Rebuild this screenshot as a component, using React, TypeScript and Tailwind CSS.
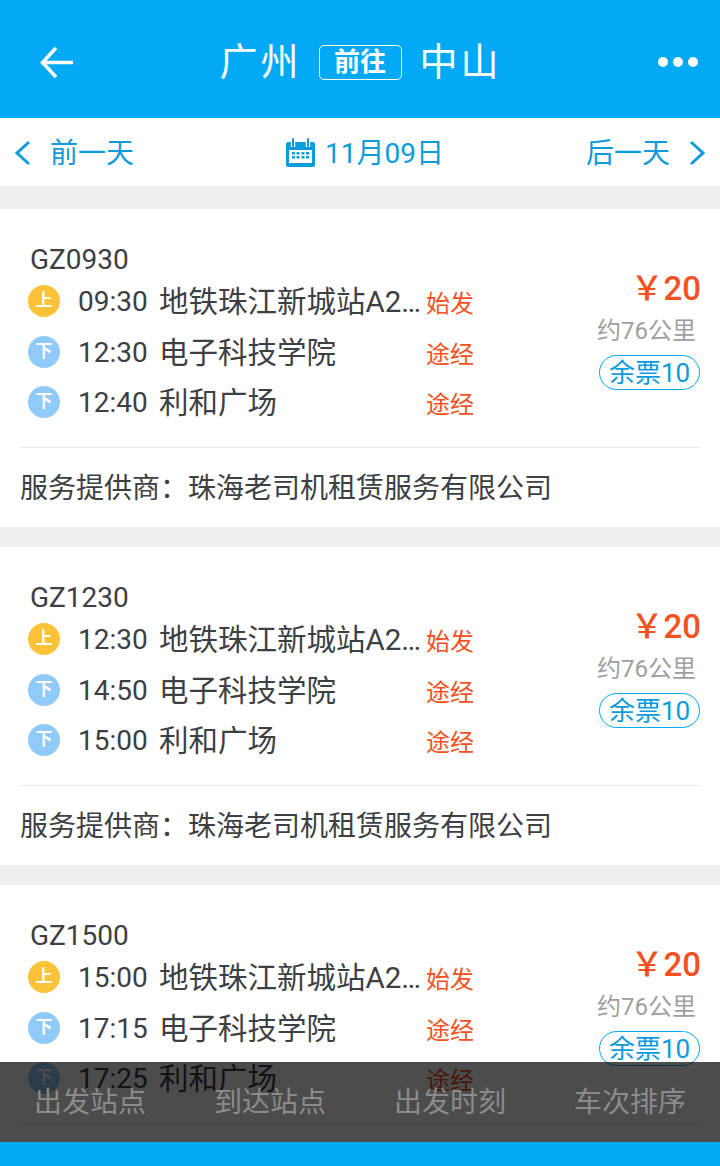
import React from "react";

const font = { fontFamily: '"Roboto","Noto Sans CJK SC",sans-serif' };

function Badge({ up }: { up: boolean }) {
  return (
    <div className={`w-8 h-8 rounded-full flex items-center justify-center text-[17px] font-bold text-white shrink-0 ${up ? "bg-[#fdc338]" : "bg-[#90caf9]"}`}>
      {up ? "上" : "下"}
    </div>
  );
}

function Stop({ up, time, name, tag, first }: { up: boolean; time: string; name: string; tag: string; first?: boolean }) {
  return (
    <div className={`h-[50px] flex items-center pl-7 ${first ? "mb-px" : ""}`}>
      <Badge up={up} />
      <div className="ml-[18px] mt-[2px] w-[81px] text-[28px] leading-none text-[#3c4043] whitespace-nowrap">{time}</div>
      <div className="w-[267px] mt-[2px] text-[29.5px] leading-[36px] text-[#3c4043] whitespace-nowrap overflow-hidden text-ellipsis">{name}</div>
      <div className="text-[24px] leading-none text-[#f4511e] mt-[6px]">{tag}</div>
    </div>
  );
}

function Card({ code, times }: { code: string; times: string[] }) {
  return (
    <div className="bg-white h-[318px] mb-5 relative shrink-0">
      <div className="pt-[34px] pl-[30px] text-[28px] leading-[34px] text-[#3c4043]">{code}</div>
      <div className="-mt-px">
        <Stop first up time={times[0]} name="地铁珠江新城站A2出口" tag="始发" />
        <Stop up={false} time={times[1]} name="电子科技学院" tag="途经" />
        <Stop up={false} time={times[2]} name="利和广场" tag="途经" />
      </div>
      <div className="absolute right-5 top-[60px] flex flex-col items-end">
        <div className="text-[33px] leading-10 font-medium text-[#f4511e] -mr-px">￥20</div>
        <div className="text-[24px] leading-8 mt-[6px] mr-1 text-[#9e9e9e]">约76公里</div>
        <div className="mt-[8px] h-[35px] w-[101px] rounded-full border border-[#03a9f4] text-[#0d9bdc] text-[26px] leading-[35px] text-center">余票10</div>
      </div>
      <div className="mt-[20px] mx-5 border-t border-[#e8e8e8] pt-[21px] text-[28px] leading-10 text-[#3c4043]">
        服务提供商：珠海老司机租赁服务有限公司
      </div>
    </div>
  );
}

export default function App() {
  return (
    <div style={font} className="relative w-[720px] h-[1166px] overflow-hidden flex flex-col bg-[#eeeeee]">
      <header className="h-[118px] bg-[#03a9f4] flex items-center justify-between pl-[40px] pr-[22px] pt-[6px] text-white shrink-0">
        <svg width="33" height="33" viewBox="0 0 33 33" fill="none" stroke="white" strokeWidth="3.500">
          <path d="M33 16.500H3M16 2 2.500 16.500 16 31" />
        </svg>
        <div className="flex items-center text-[38px] leading-none mr-[10px]">
          <span className="tracking-[3px]">广州</span>
          <span className="ml-[17px] mr-[18px] w-[83px] h-[35px] rounded-[5px] border border-white text-[26px] font-bold leading-[32px] text-center">前往</span>
          <span className="tracking-[3px]">中山</span>
        </div>
        <div className="flex gap-[5px]">
          <span className="w-[10px] h-[10px] rounded-full bg-white" />
          <span className="w-[10px] h-[10px] rounded-full bg-white" />
          <span className="w-[10px] h-[10px] rounded-full bg-white" />
        </div>
      </header>
      <div className="h-[68px] bg-white flex items-center justify-between pl-[14px] pr-[14px] pt-[4px] text-[#0d9bdc] text-[28px] shrink-0">
        <div className="flex items-center gap-[19px]">
          <svg width="17" height="26" viewBox="0 0 17 26" fill="none" stroke="#0d9bdc" strokeWidth="3" className="-mt-[3px]"><path d="M15 2 3 13l12 11" /></svg>
          <span>前一天</span>
        </div>
        <div className="flex items-center gap-[10px] ml-[10px]">
          <svg width="29" height="29" viewBox="0 0 29 29" className="-mt-[3px]">
            <path fill="#0d9bdc" d="M2 4h25a2 2 0 0 1 2 2v21a2 2 0 0 1-2 2H2a2 2 0 0 1-2-2V6a2 2 0 0 1 2-2Z" />
            <path stroke="#fff" strokeWidth="4.500" d="M7 1v8M22 1v8" />
            <path stroke="#0d9bdc" strokeWidth="2" strokeLinecap="round" d="M7 1v7M22 1v7" />
            <path fill="#fff" d="M3 12h23v13H3z" />
            <path fill="#0d9bdc" d="M6 14h3v2.500H6zM10.500 14h3v2.500h-3zM15.500 14h3v2.500h-3zM20 14h3v2.500h-3zM6 18h3v2.500H6zM10.500 18h3v2.500h-3zM15.500 18h3v2.500h-3zM20 18h3v2.500h-3z" />
          </svg>
          <span>11月09日</span>
        </div>
        <div className="flex items-center gap-[19px]">
          <span>后一天</span>
          <svg width="17" height="26" viewBox="0 0 17 26" fill="none" stroke="#0d9bdc" strokeWidth="3" className="-mt-[3px]"><path d="M2 2l12 11L2 24" /></svg>
        </div>
      </div>
      <main className="flex-1 min-h-0 overflow-hidden pt-[23px] flex flex-col">
        <Card code="GZ0930" times={["09:30", "12:30", "12:40"]} />
        <Card code="GZ1230" times={["12:30", "14:50", "15:00"]} />
        <Card code="GZ1500" times={["15:00", "17:15", "17:25"]} />
      </main>
      <div className="h-6 bg-[#03a9f4] shrink-0" />
      <nav className="absolute left-0 right-0 bottom-6 h-20 bg-[rgba(0,0,0,0.7)] grid grid-cols-4 pt-[21px] text-center text-[28px] leading-10 text-[#8b8b8b]">
        <span>出发站点</span>
        <span>到达站点</span>
        <span>出发时刻</span>
        <span>车次排序</span>
      </nav>
    </div>
  );
}
